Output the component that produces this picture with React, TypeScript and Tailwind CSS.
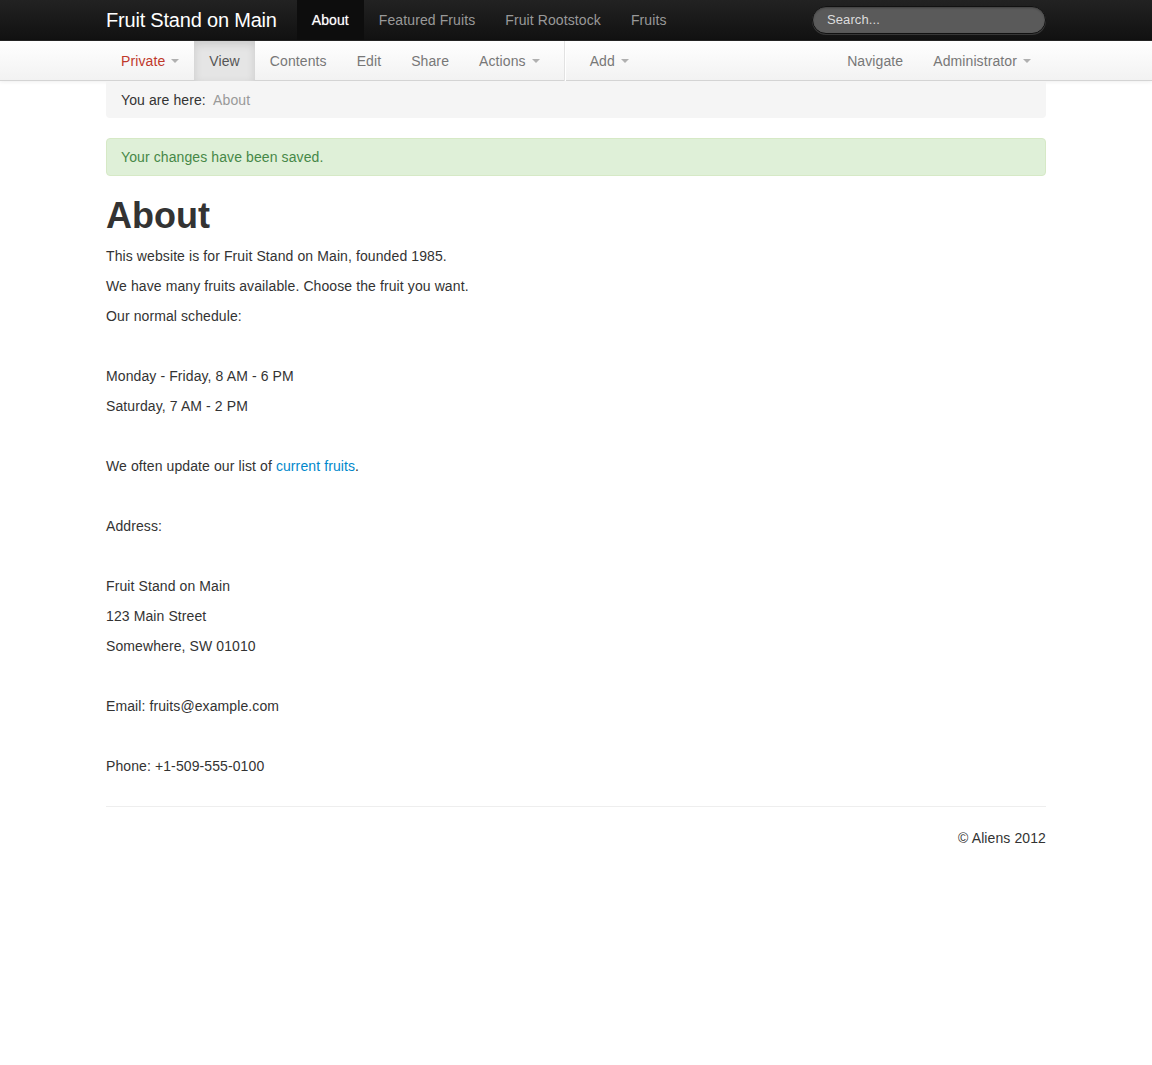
import React from 'react';

const Caret = ({ color = 'border-t-[#999]' }: { color?: string }) => (
  <span className={`ml-[6px] inline-block h-0 w-0 border-x-4 border-t-4 border-x-transparent ${color} align-middle`} />
);

export default function App() {
  const topLinks = ['Featured Fruits', 'Fruit Rootstock', 'Fruits'];

  const lines: (React.ReactNode | null)[] = [
    'This website is for Fruit Stand on Main, founded 1985.',
    'We have many fruits available. Choose the fruit you want.',
    'Our normal schedule:',
    null,
    'Monday - Friday, 8 AM - 6 PM',
    'Saturday, 7 AM - 2 PM',
    null,
    <>
      We often update our list of{' '}
      <a href="#" className="text-[#0088cc]">current fruits</a>.
    </>,
    null,
    'Address:',
    null,
    'Fruit Stand on Main',
    '123 Main Street',
    'Somewhere, SW 01010',
    null,
    'Email: fruits@example.com',
    null,
    'Phone: +1-509-555-0100',
  ];

  return (
    <div className="min-h-screen bg-white text-[14px] leading-[20px] tracking-[0.1px] text-[#333] font-['Liberation_Sans',Arial,sans-serif]">
      {/* top dark bar */}
      <div className="h-[41px] bg-gradient-to-b from-[#222] to-[#111] border-b border-[#252525]">
        <div className="mx-auto flex h-[40px] w-[940px] items-center">
          <a href="#" className="pr-[20px] text-[20px] leading-[40px] tracking-[-0.2px] text-white">Fruit Stand on Main</a>
          <a href="#" className="bg-[#0d0d0d] px-[15px] leading-[40px] text-white [text-shadow:0_0_1px_rgba(255,255,255,0.6)]">About</a>
          {topLinks.map(l => (
            <a key={l} href="#" className="px-[15px] leading-[40px] text-[#999]">{l}</a>
          ))}
          <div className="ml-auto">
            <div className="flex h-[28px] w-[234px] items-center rounded-[15px] border border-[#111] bg-[#5a5a5a] px-[14px] text-[13px] text-[#ddd] shadow-[inset_0_1px_2px_rgba(0,0,0,0.3),0_1px_0_rgba(255,255,255,0.15)]">
              Search...
            </div>
          </div>
        </div>
      </div>

      {/* edit toolbar */}
      <div className="h-[40px] border-b border-[#d4d4d4] bg-gradient-to-b from-white to-[#f2f2f2] shadow-[0_1px_4px_rgba(0,0,0,0.065)]">
        <div className="mx-auto flex h-[40px] w-[940px] items-stretch text-[#777]">
          <a href="#" className="flex items-center px-[15px] text-[#c0392b]">
            Private <Caret color="border-t-[#b0b0b0]" />
          </a>
          <a href="#" className="flex items-center bg-[#e5e5e5] px-[15px] text-[#555] shadow-[inset_0_3px_8px_rgba(0,0,0,0.125)]">View</a>
          <a href="#" className="flex items-center px-[15px]">Contents</a>
          <a href="#" className="flex items-center px-[15px]">Edit</a>
          <a href="#" className="flex items-center px-[15px]">Share</a>
          <a href="#" className="flex items-center px-[15px]">
            Actions <Caret color="border-t-[#b0b0b0]" />
          </a>
          <div className="mx-[9px] w-[2px] border-l border-r border-l-[#e2e2e2] border-r-white" />
          <a href="#" className="flex items-center px-[15px]">
            Add <Caret color="border-t-[#b0b0b0]" />
          </a>
          <div className="ml-auto flex items-stretch">
            <a href="#" className="flex items-center px-[15px]">Navigate</a>
            <a href="#" className="flex items-center px-[15px]">
              Administrator <Caret color="border-t-[#b0b0b0]" />
            </a>
          </div>
        </div>
      </div>

      <div className="mx-auto w-[940px] pt-[1px]">
        <div className="mb-[20px] rounded-b-[4px] bg-[#f5f5f5] px-[15px] py-[8px]">
          You are here:&nbsp; <a href="#" className="text-[#999]">About</a>
        </div>

        <div className="mb-[20px] rounded-[4px] border border-[#d6e9c6] bg-[#dff0d8] py-[8px] pl-[14px] pr-[35px] text-[#468847]">
          Your changes have been saved.
        </div>

        <h1 className="mb-[10px] text-[36px] leading-[40px] font-bold tracking-normal text-[#333]">About</h1>

        {lines.map((l, i) => (
          <p key={i} className="mb-[10px]">{l ?? '\u00a0'}</p>
        ))}

        <hr className="mt-[30px] mb-[20px] border-0 border-t border-b border-t-[#eee] border-b-white" />

        <footer className="text-right">
          <p>© Aliens 2012</p>
        </footer>
      </div>
    </div>
  );
}
